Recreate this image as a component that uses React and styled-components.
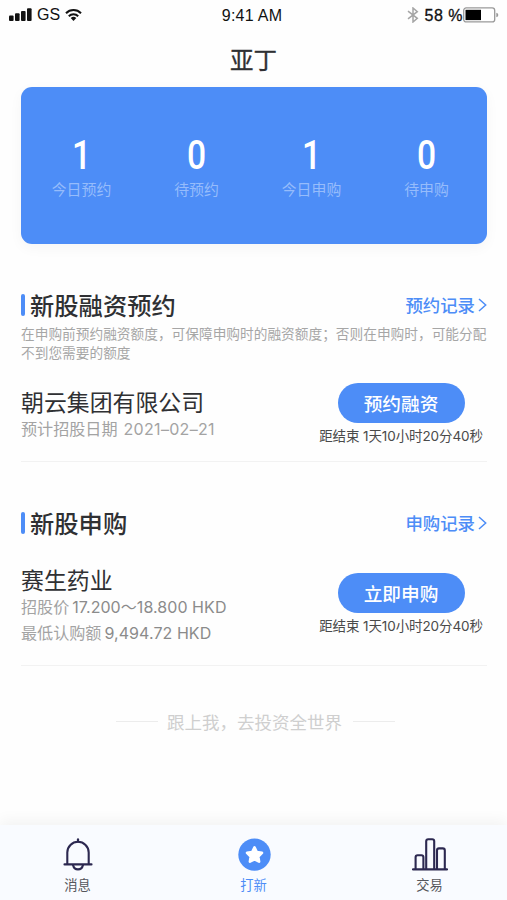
import styled, { createGlobalStyle } from "styled-components";

const GlobalStyle = createGlobalStyle`
    * {
        box-sizing: border-box;
    }

    body {
        margin: 0;
        background-color: #fefefe;
        font-family: "Noto Sans CJK SC", sans-serif;
        color: #2f3033;
    }
`;

const Page = styled.div`
    display: flex;
    flex-direction: column;
    width: 507px;
    height: 900px;
    overflow: hidden;
    white-space: nowrap;
`;

const StatusBar = styled.div`
    display: grid;
    grid-template-columns: 1fr auto 1fr;
    align-items: center;
    height: 30px;
    padding: 0 8px 0 9px;
    font-family: "Liberation Sans", sans-serif;
    font-size: 16px;
    line-height: 20px;
    color: #111;
`;

const StatusGroup = styled.div`
    display: flex;
    align-items: center;
    justify-content: ${(props) => props.$end ? "flex-end" : "flex-start"};
`;

const Carrier = styled.span`
    margin: 0 5px 1px 5px;
`;

const Percent = styled.span`
    margin: 1px 1px 0 6px;
    letter-spacing: 0.5px;
    margin-right: 0;
    -webkit-text-stroke: 0.3px #111;
`;

const Clock = styled.span`
    margin: 2px 4px 0 0;
    letter-spacing: 0.25px;
`;

const Header = styled.h1`
    margin: 0;
    height: 57px;
    font-size: 23.5px;
    line-height: 58px;
    font-weight: 400;
    text-align: center;
    -webkit-text-stroke: 0.3px #2f3033;
`;

const SummaryCard = styled.div`
    display: grid;
    grid-template-columns: repeat(4, 115px);
    justify-content: center;
    align-content: start;
    margin: 0 20px 0 21px;
    height: 157px;
    padding-top: 48px;
    border-radius: 11px;
    background-color: #4d8df7;
    box-shadow: 0 4px 14px rgba(0, 0, 0, 0.04);
`;

const Stat = styled.div`
    display: flex;
    flex-direction: column;
    align-items: center;
`;

const StatValue = styled.div`
    font-family: Roboto, sans-serif;
    font-size: 41px;
    line-height: 40px;
    font-weight: 500;
    color: white;
    transform: scaleX(0.82);
`;

const StatLabel = styled.div`
    font-size: 14.9px;
    line-height: 28px;
    color: #96bcfb;
`;

const Section = styled.section`
    height: ${(props) => props.$height};
    margin: 0 20px 0 21px;
    padding-top: ${(props) => props.$top};
    border-bottom: 1px solid #f2f2f2;
`;

const SectionHead = styled.div`
    display: flex;
    align-items: center;
    height: 38px;
`;

const Marker = styled.div`
    width: 4px;
    height: 22px;
    margin-right: 5px;
    border-radius: 2px;
    background-color: #4d8df7;
`;

const SectionTitle = styled.h2`
    flex: 1;
    margin: 0;
    font-size: 24.3px;
    line-height: 38px;
    font-weight: 500;
`;

const MoreLink = styled.a`
    display: flex;
    align-items: center;
    gap: 3px;
    font-size: 17.4px;
    line-height: 38px;
    font-weight: 500;
    color: #4d8df7;
`;

const Description = styled.p`
    margin: 0;
    font-size: 13.7px;
    line-height: 19px;
    color: #a6a6a6;
`;

const Offer = styled.div`
    display: flex;
    justify-content: space-between;
    margin-top: ${(props) => props.$gap};
`;

const OfferInfo = styled.div`
    margin-top: ${(props) => props.$shift};
`;

const OfferName = styled.div`
    font-size: 22.9px;
    line-height: 30px;
`;

const OfferRow = styled.div`
    font-size: 16.1px;
    line-height: 25.5px;
    color: #a3a3a3;
`;

const Figure = styled.span`
    margin-left: ${(props) => props.$gap || "3px"};
    font-family: Inter, "Noto Sans CJK SC", sans-serif;
    font-size: 16px;
    line-height: 1;
    letter-spacing: ${(props) => props.$spacing || "0.06px"};
    color: ${(props) => props.color || "#8b8b8b"};
`;

const OfferAction = styled.div`
    display: flex;
    flex-direction: column;
    align-items: center;
    width: 164px;
    margin-right: 4px;
`;

const ActionButton = styled.button`
    width: 127px;
    height: 40px;
    padding: 0;
    border: none;
    border-radius: 20px;
    font-family: inherit;
    font-size: 18.7px;
    line-height: 40px;
    font-weight: 500;
    color: white;
    background-color: #4d8df7;
    cursor: pointer;
`;

const Countdown = styled.div`
    font-family: Inter, "Noto Sans CJK SC", sans-serif;
    font-size: 13.5px;
    line-height: 26px;
    letter-spacing: -0.1px;
    color: #4a4a4a;
`;

const Slogan = styled.div`
    display: flex;
    align-items: center;
    justify-content: center;
    gap: 10px;
    height: 110px;
    margin-left: 4px;
    font-size: 17.5px;
    color: #cfcfcf;

    &::before,
    &::after {
        content: "";
        width: 42px;
        height: 1px;
        background-color: #ececec;
    }

    &::before {
        margin-right: -1px;
    }

    &::after {
        margin-left: 1px;
    }
`;

const TabBar = styled.nav`
    display: grid;
    grid-template-columns: repeat(3, 176px);
    justify-content: center;
    height: 75px;
    margin-top: auto;
    background-color: #f9fbff;
    box-shadow: 0 -4px 14px rgba(0, 0, 0, 0.05);
`;

const Tab = styled.div`
    display: flex;
    flex-direction: column;
    align-items: center;
    padding-top: 12px;
    font-size: 13.3px;
    line-height: 28px;
    color: ${(props) => props.$active ? "#4d8df7" : "#55565c"};
`;

const stats = [
    { value: 1, label: "今日预约" },
    { value: 0, label: "待预约" },
    { value: 1, label: "今日申购" },
    { value: 0, label: "待申购" },
];

function SignalIcon() {
    return (
        <svg width="23" height="14" viewBox="0 0 23 14" fill="#111">
            <rect x="0" y="7.5" width="4.6" height="5.5" rx="1" />
            <rect x="6" y="5.3" width="4.6" height="7.7" rx="1" />
            <rect x="12" y="3" width="4.6" height="10" rx="1" />
            <rect x="18" y="0.3" width="4.6" height="12.7" rx="1" />
        </svg>
    );
}

function WifiIcon() {
    return (
        <svg width="17" height="14" viewBox="0 0 17 14" fill="none" stroke="#111" strokeWidth="2">
            <path d="M1 5.2a10.6 10.6 0 0 1 15 0" />
            <path d="M3.8 8.2a6.6 6.6 0 0 1 9.4 0" />
            <path d="M8.5 13 5.7 10.1a4 4 0 0 1 5.6 0z" fill="#111" stroke="none" />
        </svg>
    );
}

function BluetoothIcon() {
    return (
        <svg width="12" height="16" viewBox="0 0 12 16" fill="none" stroke="#a5a5a5" strokeWidth="1.5">
            <path d="M1 4.2 10.3 11.3 6 15V1l4.3 3.7L1 11.8" />
        </svg>
    );
}

function BatteryIcon() {
    return (
        <svg width="36" height="16" viewBox="0 0 36 16">
            <rect x="0.7" y="0.9" width="31" height="14" rx="2.5" fill="white" stroke="#999" strokeWidth="1.3" />
            <rect x="2.5" y="2.8" width="15.5" height="10.3" fill="#000" />
            <path d="M33.3 5.7q2 .4 2 2.3t-2 2.3z" fill="#999" />
        </svg>
    );
}

function ChevronIcon() {
    return (
        <svg width="9" height="14" viewBox="0 0 9 14" fill="none" stroke="#4d8df7" strokeWidth="1.5">
            <path d="M1 1l6.7 6L1 13" />
        </svg>
    );
}

function BellIcon() {
    return (
        <svg width="30" height="34" viewBox="0 0 30 34" fill="none" stroke="#2c2850" strokeWidth="2.1" strokeLinecap="round">
            <path d="M15 2.2v2.6" />
            <path d="M4.3 27V15.5a10.7 10.7 0 0 1 21.4 0V27" />
            <path d="M1.5 27.4h27" />
            <path d="M10 28q1 4.4 5 4.4t5-4.4" />
        </svg>
    );
}

function StarIcon() {
    return (
        <svg width="34" height="34" viewBox="0 0 34 34">
            <circle cx="17.5" cy="17.6" r="16.2" fill="#4d8df7" />
            <path
                d="M17.5 10.3l2.3 4.7 5.2.8-3.7 3.7.8 5.2-4.6-2.4-4.6 2.4.8-5.2-3.7-3.7 5.2-.8z"
                fill="white"
                stroke="white"
                strokeWidth="2.6"
                strokeLinejoin="round"
            />
        </svg>
    );
}

function ChartIcon() {
    return (
        <svg width="36" height="34" viewBox="0 0 36 34" fill="none" stroke="#2c2850" strokeWidth="2.1" strokeLinecap="round">
            <path d="M1 32.4h34" />
            <path d="M3.6 32V20.2q0-2 2-2h3.8q2 0 2 2V32" />
            <path d="M14.2 32V4.2q0-2 2-2h4q2 0 2 2V32" />
            <path d="M25 32V13.4q0-2 2-2h3.8q2 0 2 2V32" />
        </svg>
    );
}

export default function App() {
    return (
        <Page>
            <GlobalStyle />
            <StatusBar>
                <StatusGroup>
                    <SignalIcon />
                    <Carrier>GS</Carrier>
                    <WifiIcon />
                </StatusGroup>
                <Clock>9:41 AM</Clock>
                <StatusGroup $end>
                    <BluetoothIcon />
                    <Percent>58 %</Percent>
                    <BatteryIcon />
                </StatusGroup>
            </StatusBar>
            <Header>亚丁</Header>

            <SummaryCard>
                {stats.map((stat) => (
                    <Stat key={stat.label}>
                        <StatValue>{stat.value}</StatValue>
                        <StatLabel>{stat.label}</StatLabel>
                    </Stat>
                ))}
            </SummaryCard>

            <Section $height="218px" $top="42px">
                <SectionHead>
                    <Marker />
                    <SectionTitle>新股融资预约</SectionTitle>
                    <MoreLink>预约记录<ChevronIcon /></MoreLink>
                </SectionHead>
                <Description>
                    在申购前预约融资额度，可保障申购时的融资额度；否则在申购时，可能分配
                    <br />
                    不到您需要的额度
                </Description>
                <Offer $gap="21px">
                    <OfferInfo $shift="3px">
                        <OfferName>朝云集团有限公司</OfferName>
                        <OfferRow>
                            预计招股日期
                            <Figure $gap="6px" $spacing="0.3px" color="#a3a3a3">2021–02–21</Figure>
                        </OfferRow>
                    </OfferInfo>
                    <OfferAction>
                        <ActionButton>预约融资</ActionButton>
                        <Countdown>距结束 1天10小时20分40秒</Countdown>
                    </OfferAction>
                </Offer>
            </Section>

            <Section $height="204px" $top="42px">
                <SectionHead>
                    <Marker />
                    <SectionTitle>新股申购</SectionTitle>
                    <MoreLink>申购记录<ChevronIcon /></MoreLink>
                </SectionHead>
                <Offer $gap="31px">
                    <OfferInfo $shift="-9px">
                        <OfferName>赛生药业</OfferName>
                        <OfferRow>招股价<Figure>17.200～18.800 HKD</Figure></OfferRow>
                        <OfferRow>最低认购额<Figure>9,494.72 HKD</Figure></OfferRow>
                    </OfferInfo>
                    <OfferAction>
                        <ActionButton>立即申购</ActionButton>
                        <Countdown>距结束 1天10小时20分40秒</Countdown>
                    </OfferAction>
                </Offer>
            </Section>

            <Slogan>跟上我，去投资全世界</Slogan>

            <TabBar>
                <Tab>
                    <BellIcon />
                    消息
                </Tab>
                <Tab $active>
                    <StarIcon />
                    打新
                </Tab>
                <Tab>
                    <ChartIcon />
                    交易
                </Tab>
            </TabBar>
        </Page>
    );
}
